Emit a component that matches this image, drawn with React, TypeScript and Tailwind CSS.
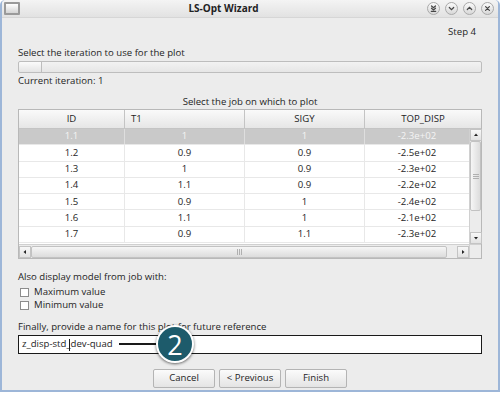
import { useState } from 'react';

const rows = [
  { id: '1.1', t1: '1', sigy: '1', disp: '-2.3e+02' },
  { id: '1.2', t1: '0.9', sigy: '0.9', disp: '-2.5e+02' },
  { id: '1.3', t1: '1', sigy: '0.9', disp: '-2.3e+02' },
  { id: '1.4', t1: '1.1', sigy: '0.9', disp: '-2.2e+02' },
  { id: '1.5', t1: '0.9', sigy: '1', disp: '-2.4e+02' },
  { id: '1.6', t1: '1.1', sigy: '1', disp: '-2.1e+02' },
  { id: '1.7', t1: '0.9', sigy: '1.1', disp: '-2.3e+02' },
];

function TitleButton({ kind }: { kind: 'tray' | 'min' | 'max' | 'close' }) {
  return (
    <div className="w-[13px] h-[13px] rounded-full border border-[#a9a9a9] bg-gradient-to-b from-[#fafafa] to-[#d8d8d8] flex items-center justify-center">
      <svg width="9" height="9" viewBox="0 0 9 9" fill="none" stroke="#444" strokeWidth="1.2" strokeLinecap="round">
        {kind === 'tray' && (
          <>
            <path d="M2.5 2 L4.5 3.8 L6.5 2" />
            <path d="M2.5 4.2 L4.5 6 L6.5 4.2" />
            <path d="M2.3 7.3 H6.7" />
          </>
        )}
        {kind === 'min' && <path d="M2.3 3.5 L4.5 5.7 L6.7 3.5" />}
        {kind === 'max' && <path d="M2.3 5.5 L4.5 3.3 L6.7 5.5" />}
        {kind === 'close' && <path d="M2.6 2.6 L6.4 6.4 M6.4 2.6 L2.6 6.4" />}
      </svg>
    </div>
  );
}

function ArrowBox({ dir }: { dir: 'up' | 'down' | 'left' | 'right' }) {
  const pts = {
    up: '2,5 6,5 4,2.5',
    down: '2,3 6,3 4,5.5',
    left: '5,2 5,6 2.5,4',
    right: '3,2 3,6 5.5,4',
  }[dir];
  return (
    <div className="w-[12px] h-[12px] bg-gradient-to-b from-[#f8f8f8] to-[#e2e2e2] border border-[#c4c4c4] flex items-center justify-center">
      <svg width="8" height="8" viewBox="0 0 8 8">
        <polygon points={pts} fill="#222" />
      </svg>
    </div>
  );
}

function Checkbox({ label }: { label: string }) {
  const [on, setOn] = useState(false);
  return (
    <label className="flex items-center h-[13px] pl-[2px] gap-[5px] cursor-default" onClick={() => setOn(!on)}>
      <span className="w-[9px] h-[9px] border border-[#8c8c8c] bg-white flex items-center justify-center text-[8px] leading-none">
        {on ? '✓' : ''}
      </span>
      <span>{label}</span>
    </label>
  );
}

export default function App() {
  const [selected, setSelected] = useState(0);

  return (
    <div className="w-[500px] h-[394px] bg-white overflow-hidden" style={{ fontFamily: '"Open Sans", "DejaVu Sans", sans-serif' }}>
      <div className="w-[500px] h-[392px] rounded-t-[5px] border-x-2 border-b-2 border-[#9db6d8] bg-[#ececec] flex flex-col text-[9.6px] text-[#1e1e1e]">
        {/* Title bar */}
        <div className="h-[18px] shrink-0 rounded-t-[4px] bg-gradient-to-b from-[#f4f4f4] to-[#e2e2e2] border-b border-[#d6d6d6] flex items-center px-[2px]">
          <div className="w-[16px] h-[13px] border-2 border-[#9a9a9a] bg-gradient-to-b from-[#ffffff] to-[#d4d4d4] rounded-[1px]" />
          <div className="flex-1 text-center font-bold text-[10px] text-[#222]">LS-Opt Wizard</div>
          <div className="flex items-center gap-[5px] pr-[2px]">
            <TitleButton kind="tray" />
            <TitleButton kind="min" />
            <TitleButton kind="max" />
            <TitleButton kind="close" />
          </div>
        </div>

        <div className="flex flex-col px-[16px]">
          <div className="h-[29px] flex items-center justify-end pr-[6px]">Step 4</div>
          <div className="h-[11px] mt-[1px] flex items-center">Select the iteration to use for the plot</div>
          <div className="h-[12px] mt-[2px] border border-[#bdbdbd] bg-gradient-to-b from-[#f2f2f2] to-[#e6e6e6] rounded-[2px] relative">
            <div className="absolute left-0 top-0 bottom-0 w-[23px] border-r border-[#bdbdbd] bg-gradient-to-b from-[#fbfbfb] to-[#e4e4e4] rounded-l-[2px]" />
          </div>
          <div className="h-[17px] flex items-center">Current iteration: 1</div>

          <div className="h-[14px] mt-[5px] flex items-center justify-center">Select the job on which to plot</div>

          {/* Table */}
          <div className="h-[150px] border border-[#b8b8b8] bg-white flex flex-col">
            <div className="h-[19px] flex bg-gradient-to-b from-[#fafafa] to-[#e6e6e6] border-b border-[#c4c4c4] shrink-0">
              <div className="w-[106px] border-r border-[#c4c4c4] flex items-center justify-center">ID</div>
              <div className="w-[120px] border-r border-[#c4c4c4] flex items-center pl-[6px]">T1</div>
              <div className="w-[120px] border-r border-[#c4c4c4] flex items-center justify-center">SIGY</div>
              <div className="flex-1 flex items-center justify-center">TOP_DISP</div>
            </div>
            <div className="flex flex-1 min-h-0">
              <div className="flex-1 flex flex-col">
                {rows.map((r, i) => (
                  <div
                    key={r.id}
                    onClick={() => setSelected(i)}
                    className={`h-[16.3px] flex border-b border-[#e8e8e8] ${selected === i ? 'bg-[#c9c9c9] text-[#f4f4f4]' : 'text-[#1e1e1e]'}`}
                  >
                    <div className={`w-[106px] border-r ${selected === i ? 'border-[#dedede]' : 'border-[#e8e8e8]'} flex items-center justify-center`}>{r.id}</div>
                    <div className={`w-[120px] border-r ${selected === i ? 'border-[#dedede]' : 'border-[#e8e8e8]'} flex items-center justify-center`}>{r.t1}</div>
                    <div className={`w-[120px] border-r ${selected === i ? 'border-[#dedede]' : 'border-[#e8e8e8]'} flex items-center justify-center`}>{r.sigy}</div>
                    <div className="flex-1 flex items-center justify-center">{r.disp}</div>
                  </div>
                ))}
              </div>
              {/* vertical scrollbar */}
              <div className="w-[12px] bg-[#ececec] flex flex-col border-l border-[#d0d0d0]">
                <ArrowBox dir="up" />
                <div className="h-[70px] bg-gradient-to-r from-[#f6f6f6] to-[#dcdcdc] border border-[#c2c2c2] rounded-[2px] flex flex-col items-center justify-center gap-[1px]">
                  <div className="w-[6px] h-px bg-[#b0b0b0]" />
                  <div className="w-[6px] h-px bg-[#b0b0b0]" />
                  <div className="w-[6px] h-px bg-[#b0b0b0]" />
                </div>
                <div className="flex-1" />
                <ArrowBox dir="down" />
              </div>
            </div>
            {/* horizontal scrollbar */}
            <div className="h-[14px] shrink-0 flex items-center bg-[#ececec] border-t border-[#d0d0d0]">
              <ArrowBox dir="left" />
              <div className="w-[416px] h-[12px] bg-gradient-to-b from-[#f6f6f6] to-[#dcdcdc] border border-[#c2c2c2] rounded-[2px] flex items-center justify-center gap-[1px]">
                <div className="w-px h-[6px] bg-[#b0b0b0]" />
                <div className="w-px h-[6px] bg-[#b0b0b0]" />
                <div className="w-px h-[6px] bg-[#b0b0b0]" />
              </div>
              <div className="flex-1" />
              <ArrowBox dir="right" />
              <div className="w-[12px] h-full bg-[#ececec] border-l border-[#d0d0d0]" />
            </div>
          </div>

          <div className="h-[14px] mt-[11px] flex items-center">Also display model from job with:</div>
          <div className="mt-[2px] flex flex-col">
            <Checkbox label="Maximum value" />
            <Checkbox label="Minimum value" />
          </div>

          <div className="h-[14px] mt-[8px] flex items-center">Finally, provide a name for this plot for future reference</div>
          <div className="relative h-[19px] mt-[1px] border border-[#1a1a1a] bg-white flex items-center pl-[3px]">
            <span>z_disp-std_</span>
            <span className="w-px h-[12px] bg-[#1a1a1a] -ml-[2px] mr-[1px]" />
            <span>dev-quad</span>
            {/* callout */}
            <div className="absolute left-[99px] top-[7px] w-[44px] h-[2px] bg-[#1a1a1a] border border-white box-content -mt-[1px]" />
            <div className="absolute left-[137px] top-[-11px] w-[38px] h-[38px] rounded-full bg-[#1d5b6b] border-2 border-white shadow-[0_1px_3px_rgba(0,0,0,0.6)] flex items-center justify-center text-white text-[27px] leading-none">
              2
            </div>
          </div>

          <div className="mt-[15px] flex justify-center gap-[4px]">
            {['Cancel', '< Previous', 'Finish'].map((b) => (
              <button
                key={b}
                className="w-[62px] h-[19px] border border-[#b4b4b4] rounded-[2px] bg-gradient-to-b from-[#fbfbfb] to-[#e4e4e4] text-[9.6px] text-[#1e1e1e]"
              >
                {b}
              </button>
            ))}
          </div>
        </div>
      </div>
    </div>
  );
}
